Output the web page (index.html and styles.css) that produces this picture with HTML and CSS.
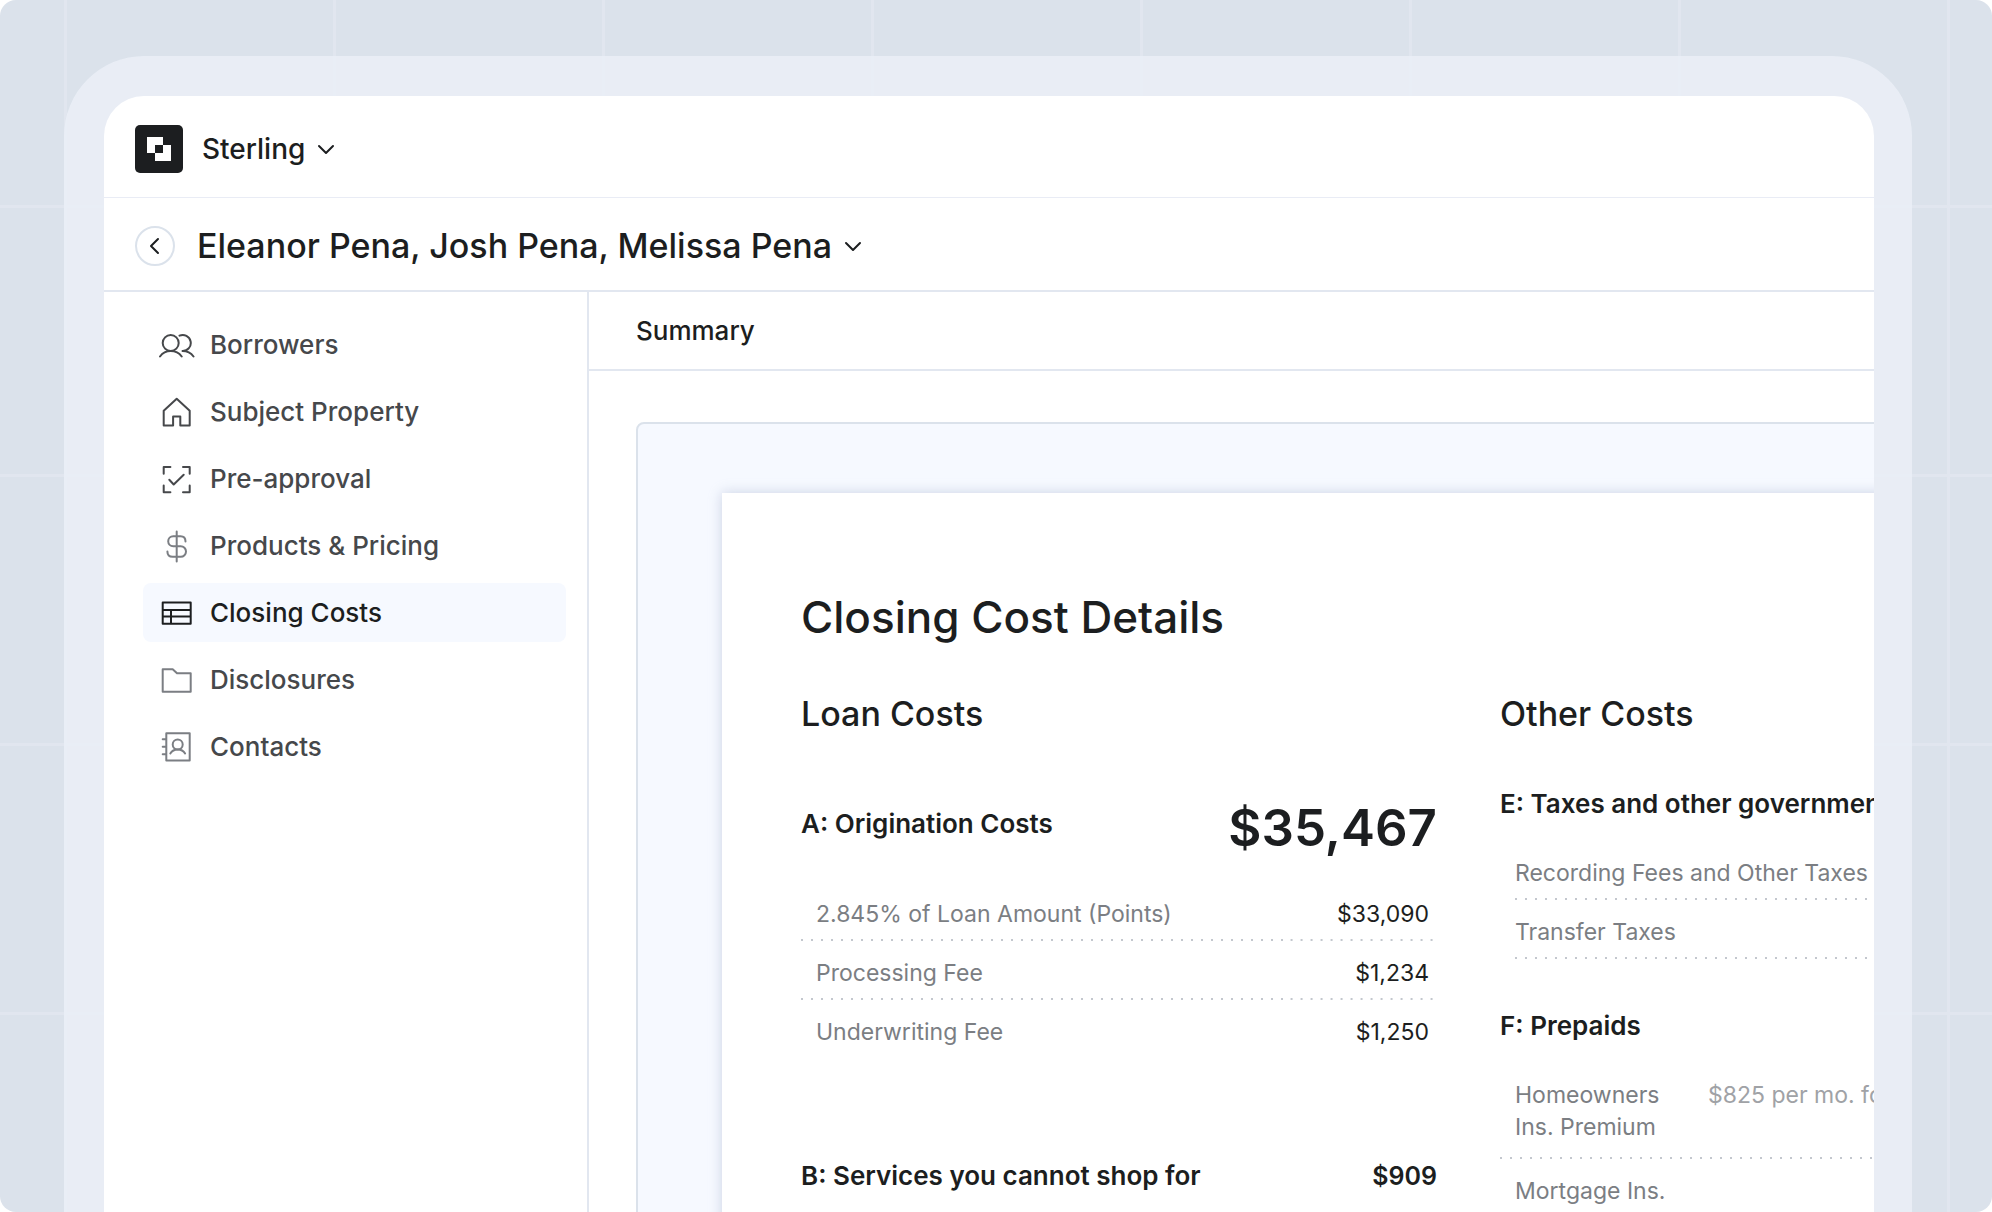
FILE: index.html
```
<!DOCTYPE html>
<html lang="en">
<head>
  <meta charset="UTF-8">
  <meta name="viewport" content="width=device-width, initial-scale=1.0">
  <title>Sterling – Closing Costs</title>
  <link rel="stylesheet" href="styles.css">
</head>
<body>
  <div class="stage">
    <div class="frame">
      <div class="window">

        <!-- Workspace bar -->
        <header class="topbar">
          <svg class="logo" viewBox="0 0 48 48" aria-hidden="true">
            <rect width="48" height="48" rx="5" fill="#1c1e20"/>
            <path d="M12 12h16v8h8v16H20v-8h-8z" fill="#fff"/>
            <rect x="20" y="20" width="8" height="8" fill="#1c1e20"/>
          </svg>
          <button class="switcher" type="button" aria-haspopup="true">
            Sterling
            <svg class="chevron" viewBox="0 0 20 20" aria-hidden="true"><path d="M3 7l7 7 7-7"/></svg>
          </button>
        </header>

        <!-- Borrower bar -->
        <div class="filebar">
          <button class="back" type="button" aria-label="Back">
            <svg viewBox="0 0 20 20" aria-hidden="true"><path d="M13 3l-7 7 7 7"/></svg>
          </button>
          <button class="switcher switcher-lg" type="button" aria-haspopup="true">
            Eleanor Pena, Josh Pena, Melissa Pena
            <svg class="chevron" viewBox="0 0 20 20" aria-hidden="true"><path d="M3 7l7 7 7-7"/></svg>
          </button>
        </div>

        <div class="body">
          <nav class="sidebar">
            <a class="nav-item" href="#">
              <svg viewBox="0 0 36 36" aria-hidden="true"><circle cx="11.7" cy="16" r="8"/><path d="M1 29.5C3.5 26 7.500 24 11.7 24s8.5 2 11 5.5M20.500 8.700A8 8 0 1 1 23.500 24c4.500 0 8.500 2 11 5.500"/></svg>
              Borrowers
            </a>
            <a class="nav-item" href="#">
              <svg viewBox="0 0 36 36" aria-hidden="true"><path d="M4.700 16.800l13-12 13 12v14.700h-9.400v-9h-7.200v9H4.700z"/></svg>
              Subject Property
            </a>
            <a class="nav-item" href="#">
              <svg viewBox="0 0 36 36" aria-hidden="true"><path d="M4.700 12.700V6h6.700M24 6h6.700v6.700M30.700 24.500v6.700H24M11.400 31.200H4.700v-6.700M10.300 18.800l4.400 4.700 10-9.700"/></svg>
              Pre-approval
            </a>
            <a class="nav-item" href="#">
              <svg class="soft" viewBox="0 0 36 36" aria-hidden="true"><path d="M17.700 3.500v30M26.500 13.500c0-3.200-2-5.300-5-5.300h-7.300a5 5 0 0 0 0 10h7.500a5.300 5.300 0 0 1 0 10.600h-8c-3.200 0-5.300-2-5.300-5.300"/></svg>
              Products &amp; Pricing
            </a>
            <a class="nav-item active" href="#" aria-current="page">
              <svg viewBox="0 0 36 36" aria-hidden="true"><path d="M3.700 7.500h28v21.300h-28zM3.700 15h28M3.700 21.500h28M12 15v13.800"/></svg>
              Closing Costs
            </a>
            <a class="nav-item" href="#">
              <svg class="soft" viewBox="0 0 36 36" aria-hidden="true"><path d="M3.700 7.200h10l4.300 4h13.700v18.600h-28z"/></svg>
              Disclosures
            </a>
            <a class="nav-item" href="#">
              <svg class="soft" viewBox="0 0 36 36" aria-hidden="true"><path d="M7.300 4.200h23.400v27.300H7.300zM3.700 10.200h3.600M3.700 17.800h3.600M3.700 25.300h3.600M11.300 24.500c1.500-2.500 4.500-4 7.400-4s5.900 1.500 7.400 4"/><circle cx="18.700" cy="15.500" r="5"/></svg>
              Contacts
            </a>
          </nav>

          <main class="content">
            <div class="tabs"><a class="tab" href="#">Summary</a></div>

            <div class="panel">
              <article class="paper">
                <h1>Closing Cost Details</h1>
                <div class="columns">

                  <section class="column">
                    <h2>Loan Costs</h2>
                    <div class="group group-loan">
                      <div class="group-head">
                        <h3>A: Origination Costs</h3>
                        <strong class="total">$35,467</strong>
                      </div>
                      <table class="fees">
                        <tr><td>2.845% of Loan Amount (Points)</td><td class="amount">$33,090</td></tr>
                        <tr><td>Processing Fee</td><td class="amount">$1,234</td></tr>
                        <tr class="last"><td>Underwriting Fee</td><td class="amount">$1,250</td></tr>
                      </table>
                    </div>
                    <div class="group">
                      <div class="group-head">
                        <h3>B: Services you cannot shop for</h3>
                        <strong class="subtotal">$909</strong>
                      </div>
                    </div>
                  </section>

                  <section class="column column-other">
                    <h2>Other Costs</h2>
                    <div class="group group-other">
                      <div class="group-head"><h3>E: Taxes and other government fees</h3></div>
                      <table class="fees fees-inset">
                        <tr><td>Recording Fees and Other Taxes</td></tr>
                        <tr><td>Transfer Taxes</td></tr>
                      </table>
                    </div>
                    <div class="group">
                      <div class="group-head"><h3>F: Prepaids</h3></div>
                      <table class="fees">
                        <tr class="tall"><td class="label">Homeowners<br>Ins. Premium</td><td class="note">$825 per mo. for 12 mo.</td></tr>
                        <tr><td class="label">Mortgage Ins.</td><td></td></tr>
                      </table>
                    </div>
                  </section>

                </div>
              </article>
            </div>
          </main>
        </div>

      </div>
    </div>
  </div>
</body>
</html>
```
FILE: styles.css
```
/* ====== Base ====== */
*{box-sizing:border-box}
body{margin:0;background:#fff;color:#1c1e20;font-family:Inter,"Liberation Sans",Arial,sans-serif;font-size:26px}
h1,h2,h3{margin:0;font-weight:500}
button{font:inherit;color:inherit;background:none;border:none;padding:0;cursor:pointer}
a{color:inherit;text-decoration:none}
svg{flex:none;fill:none;stroke:currentColor;stroke-width:2;stroke-linecap:round;stroke-linejoin:round}

/* ====== Backdrop & frame ====== */
.stage{height:100vh;padding:56px 80px 0 64px;display:flex;overflow:hidden;border-radius:16px;background-color:#dbe2eb;
  background-image:linear-gradient(90deg,#e1e6ef 3px,transparent 3px),linear-gradient(#e1e6ef 3px,transparent 3px);
  background-size:269px 269px;background-position:64px 205px}
.frame{flex:1;min-width:0;display:flex;padding:40px 38px 0 40px;border-radius:80px 80px 0 0;background:rgba(234,238,246,.9)}
.window{flex:1;min-width:0;display:flex;flex-direction:column;overflow:hidden;background:#fff;border-radius:40px 40px 0 0}

/* ====== Top bars ====== */
.topbar{flex:none;display:flex;align-items:center;gap:19px;padding:29px 31px 24px;border-bottom:1px solid #e9ecf5}
.logo{width:48px;height:48px;stroke:none}
.filebar{flex:none;display:flex;align-items:center;gap:22px;padding:28px 31px 24px;border-bottom:2px solid #e2e7f0}
.switcher{display:flex;align-items:center;gap:11px;font-size:28px;line-height:40px;font-weight:500}
.switcher-lg{font-size:34px}
.chevron{width:20px;height:20px}
.back{width:40px;height:40px;display:flex;align-items:center;justify-content:center;border:2px solid #dbe2eb;border-radius:50%}
.back svg{width:20px;height:20px}

/* ====== Sidebar ====== */
.body{flex:1;min-height:0;display:flex}
.sidebar{flex:none;width:485px;padding:23px 21px 0 39px;display:flex;flex-direction:column;gap:8px;border-right:2px solid #e2e7f0}
.nav-item{display:flex;align-items:center;gap:15px;height:59px;padding:0 16px;border-radius:8px;font-weight:500;color:#46484b}
.nav-item svg{width:36px;height:36px}
.nav-item .soft{color:#7b7e83}
.nav-item.active{background:#f6f9ff;color:#1c1e20}

/* ====== Content ====== */
.content{flex:1;min-width:0;overflow:hidden}
.tabs{display:flex;padding:0 47px;border-bottom:2px solid #e2e7f0}
.tab{line-height:77px;font-weight:500}
.panel{min-width:1700px;margin:51px 0 0 47px;padding:69px 84px;background:#f6f9ff;border:2px solid #dbe2eb;border-radius:8px}
.paper{min-height:900px;padding:96px 79px;background:#fff;box-shadow:0 0 12px rgba(150,165,195,.45)}
.paper h1{font-size:44px;line-height:56px}
.columns{display:flex;gap:63px;margin-top:49px}
.column{flex:none;width:636px}
.column h2{margin-bottom:64px;font-size:34px;line-height:40px}
.column-other h2{margin-bottom:44px}

/* ====== Cost groups ====== */
.group-head{display:flex;justify-content:space-between;line-height:52px}
.group-head h3{font-size:26px;font-weight:600;white-space:nowrap}
.total{font-size:51px;font-weight:600;line-height:60px}
.subtotal{font-size:25px;font-weight:600}
.group-loan{margin-bottom:91px}
.group-loan .fees{margin-top:24px}
.group-other{margin-bottom:41px}
.column-other .fees{margin-top:11px}

.fees{width:100%;border-collapse:collapse;font-size:23px;line-height:32px;color:#7b7e83}
.fees tr{background:linear-gradient(90deg,#c3c7ce 2px,transparent 2px) left bottom/10px 2px repeat-x}
.fees .last{background:none}
.fees td{padding:16px 0 11px 15px;vertical-align:top;white-space:nowrap}
.fees .tall td{padding-bottom:16px}
.fees .label{width:208px}
.fees .note{padding-left:0;color:#a0a2a6}
.fees .amount{padding-right:8px;text-align:right;color:#1c1e20}
.fees-inset{width:auto;min-width:621px;margin-left:15px}
.fees-inset td{padding-left:0}
```
